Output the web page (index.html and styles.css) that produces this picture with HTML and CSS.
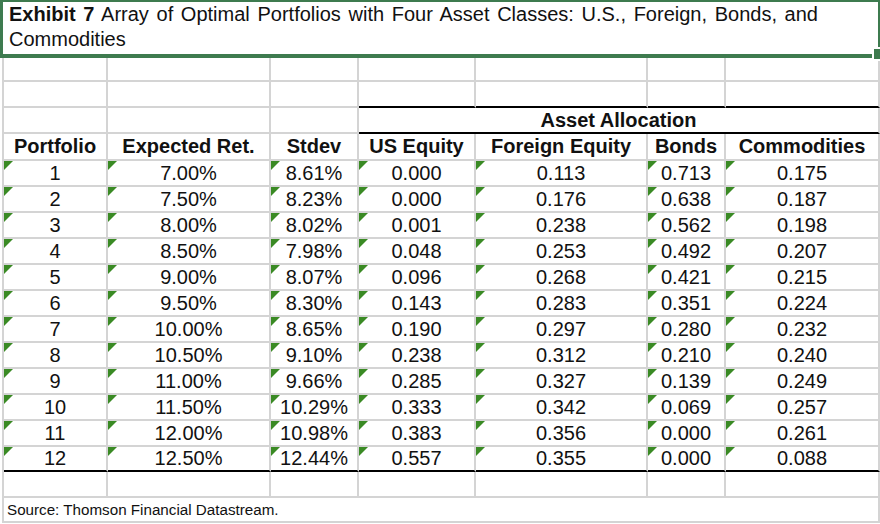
FILE: index.html
```html
<!DOCTYPE html>
<html>
<head>
<meta charset="utf-8">
<link rel="stylesheet" href="styles.css">
</head>
<body>
<div class="title"><b>Exhibit 7</b> Array of Optimal Portfolios with Four Asset Classes: U.S., Foreign, Bonds, and Commodities</div>
<div class="sheet">
  <div class="c"></div><div class="c"></div><div class="c"></div><div class="c"></div><div class="c"></div><div class="c"></div><div class="c"></div>
  <div class="c"></div><div class="c"></div><div class="c"></div><div class="c rule"></div><div class="c rule"></div><div class="c rule"></div><div class="c rule"></div>
  <div class="c"></div><div class="c"></div><div class="c"></div><div class="c rule hd span4">Asset Allocation</div>
  <div class="c hd">Portfolio</div><div class="c hd">Expected Ret.</div><div class="c hd">Stdev</div><div class="c hd">US Equity</div><div class="c hd">Foreign Equity</div><div class="c hd">Bonds</div><div class="c hd">Commodities</div>

  <div class="c t">1</div><div class="c t">7.00%</div><div class="c t">8.61%</div><div class="c t">0.000</div><div class="c t">0.113</div><div class="c t">0.713</div><div class="c t">0.175</div>
  <div class="c t">2</div><div class="c t">7.50%</div><div class="c t">8.23%</div><div class="c t">0.000</div><div class="c t">0.176</div><div class="c t">0.638</div><div class="c t">0.187</div>
  <div class="c t">3</div><div class="c t">8.00%</div><div class="c t">8.02%</div><div class="c t">0.001</div><div class="c t">0.238</div><div class="c t">0.562</div><div class="c t">0.198</div>
  <div class="c t">4</div><div class="c t">8.50%</div><div class="c t">7.98%</div><div class="c t">0.048</div><div class="c t">0.253</div><div class="c t">0.492</div><div class="c t">0.207</div>
  <div class="c t">5</div><div class="c t">9.00%</div><div class="c t">8.07%</div><div class="c t">0.096</div><div class="c t">0.268</div><div class="c t">0.421</div><div class="c t">0.215</div>
  <div class="c t">6</div><div class="c t">9.50%</div><div class="c t">8.30%</div><div class="c t">0.143</div><div class="c t">0.283</div><div class="c t">0.351</div><div class="c t">0.224</div>
  <div class="c t">7</div><div class="c t">10.00%</div><div class="c t">8.65%</div><div class="c t">0.190</div><div class="c t">0.297</div><div class="c t">0.280</div><div class="c t">0.232</div>
  <div class="c t">8</div><div class="c t">10.50%</div><div class="c t">9.10%</div><div class="c t">0.238</div><div class="c t">0.312</div><div class="c t">0.210</div><div class="c t">0.240</div>
  <div class="c t">9</div><div class="c t">11.00%</div><div class="c t">9.66%</div><div class="c t">0.285</div><div class="c t">0.327</div><div class="c t">0.139</div><div class="c t">0.249</div>
  <div class="c t">10</div><div class="c t">11.50%</div><div class="c t">10.29%</div><div class="c t">0.333</div><div class="c t">0.342</div><div class="c t">0.069</div><div class="c t">0.257</div>
  <div class="c t">11</div><div class="c t">12.00%</div><div class="c t">10.98%</div><div class="c t">0.383</div><div class="c t">0.356</div><div class="c t">0.000</div><div class="c t">0.261</div>
  <div class="c t rule">12</div><div class="c t rule">12.50%</div><div class="c t rule">12.44%</div><div class="c t rule">0.557</div><div class="c t rule">0.355</div><div class="c t rule">0.000</div><div class="c t rule">0.088</div>

  <div class="c"></div><div class="c"></div><div class="c"></div><div class="c"></div><div class="c"></div><div class="c"></div><div class="c"></div>
  <div class="c src">Source: Thomson Financial Datastream.</div>
</div>
</body>
</html>
```

FILE: styles.css
```css
html, body {
  margin: 0;
  padding: 0;
  background: #ffffff;
}

body {
  font-family: "Liberation Sans", Arial, Helvetica, sans-serif;
  color: #111111;
  width: 880px;
  height: 524px;
  overflow: hidden;
}

.title {
  position: relative;
  box-sizing: border-box;
  width: 880px;
  height: 58px;
  border-style: solid;
  border-color: #3e7b4f;
  border-width: 2px 2px 4px 3px;
  padding: 0 60px 0 6px;
  font-size: 20px;
  line-height: 25px;
  text-align: justify;
}

.title::after {
  content: "";
  position: absolute;
  right: -2px;
  bottom: -5px;
  width: 6px;
  height: 10px;
  background: #3e7b4f;
  box-shadow: 0 0 0 2px #ffffff;
  z-index: 2;
}

.sheet {
  display: grid;
  grid-template-columns: 104px 163px 88px 117px 172px 78px 154px;
  grid-template-rows: 24px 26px 26px 27px repeat(11, 26px) 25px 26px 25px;
  margin-left: 2px;
  border-left: 2px solid #d4d4d4;
}

.c {
  position: relative;
  box-sizing: border-box;
  border-right: 2px solid #d4d4d4;
  border-bottom: 2px solid #d4d4d4;
  display: flex;
  align-items: center;
  justify-content: center;
  font-size: 20px;
  white-space: nowrap;
}

.hd {
  font-weight: 700;
}

.rule {
  border-bottom-color: #000000;
}

.span4 {
  grid-column: span 4;
}

.t::before {
  content: "";
  position: absolute;
  top: 0;
  left: 0;
  width: 0;
  height: 0;
  border-top: 9px solid #3a8a24;
  border-right: 9px solid transparent;
}

.src {
  grid-column: 1 / -1;
  justify-content: flex-start;
  padding-left: 3px;
  font-size: 15.2px;
}
```
